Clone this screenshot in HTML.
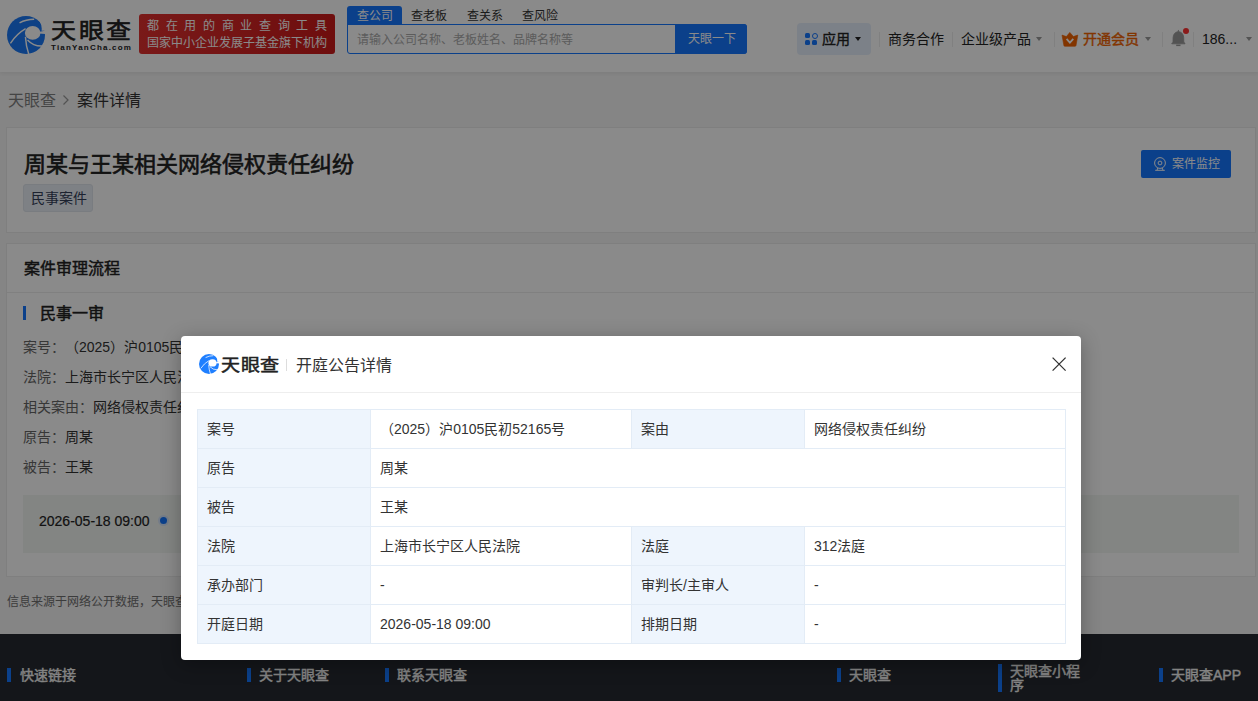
<!DOCTYPE html>
<html lang="zh-CN"><head><meta charset="utf-8">
<style>
*{box-sizing:border-box;margin:0;padding:0}
html,body{width:1258px;height:701px;overflow:hidden}
body{text-spacing-trim:space-all;position:relative;background:#f5f5f5;font-family:"Liberation Sans",sans-serif;color:#333;font-size:14px;line-height:1}
.abs{position:absolute;white-space:nowrap}
#hdr{position:absolute;left:0;top:0;width:1258px;height:72px;background:#fff;box-shadow:0 1px 4px rgba(0,0,0,0.08)}
.card{position:absolute;left:6px;width:1250px;background:#fff;border:1px solid #ebebeb}
#foot{position:absolute;left:0;top:634px;width:1258px;height:67px;background:#262a30}
.fbar{position:absolute;width:4px;height:14px;background:#1677ff}
.ft{position:absolute;color:#f2f2f2;-webkit-text-stroke:0.4px #f2f2f2;font-size:14px;line-height:14px;white-space:nowrap}
#mask{position:absolute;left:0;top:0;width:1258px;height:701px;background:rgba(0,0,0,0.46)}
#modal{position:absolute;left:181px;top:336px;width:900px;height:324px;background:#fff;border-radius:4px;box-shadow:0 4px 20px rgba(0,0,0,0.3)}
table{position:absolute;left:16px;top:73px;width:868px;border-collapse:collapse;table-layout:fixed}
td{border:1px solid #e3ecf6;height:39px;padding:0 0 0 9px;font-size:14px;color:#333;vertical-align:middle;white-space:nowrap}
td.l{background:#eef5fd;color:#333}
</style></head><body>
<div id="hdr">
  <svg class="abs" style="left:7px;top:16px" width="38" height="38" viewBox="2 2 20 20">
    <circle cx="12" cy="12" r="10" fill="#1a78f5"/>
    <ellipse cx="15.5" cy="10.9" rx="4.1" ry="3.6" fill="#fff"/>
    <path d="M15.5 10.9 L23 9.6 L23 11.6 Z" fill="#fff"/><path d="M16.6 2.6 Q20.8 5 20.2 9.7 L23 9.7 L23 2 Z" fill="#fff"/>
    <g stroke="#fff" stroke-width="0.75" fill="none">
      <path d="M11.8 8.7 Q7 11.5 3.8 16.4"/>
      <path d="M11.7 13 Q12 18 13.5 22.2"/>
      <path d="M12.8 14.6 Q16 18 20.5 17.8"/>
      <path d="M8.6 5.6 Q12 3.7 16.3 3.7"/>
    </g>
  </svg>
  <div class="abs" style="left:51px;top:19px;font-size:25px;font-weight:normal;color:#222;line-height:26px;letter-spacing:2.5px;-webkit-text-stroke:0.7px #222;transform:scaleY(0.86);transform-origin:0 0">天眼查</div>
  <div class="abs" style="left:51px;top:43px;font-size:8px;font-weight:bold;color:#222;letter-spacing:1.2px;line-height:9px">TianYanCha.com</div>
  <div class="abs" style="left:139px;top:14px;width:196px;height:40px;border-radius:3px;background:linear-gradient(90deg,#e0302f,#cc1a1a)"></div>
  <div class="abs" style="left:147px;top:19px;font-size:12px;color:#fff;letter-spacing:6.67px;line-height:14px">都在用的商业查询工具</div>
  <div class="abs" style="left:147px;top:36px;font-size:12px;color:#fff;line-height:14px">国家中小企业发展子基金旗下机构</div>
  <!-- search -->
  <div class="abs" style="left:347px;top:6px;width:55px;height:19px;background:#1677ff;border-radius:3px 3px 0 0"></div>
  <div class="abs" style="left:357px;top:9px;font-size:12px;color:#fff;line-height:14px">查公司</div>
  <div class="abs" style="left:411px;top:9px;font-size:12px;color:#333;line-height:14px">查老板</div>
  <div class="abs" style="left:467px;top:9px;font-size:12px;color:#333;line-height:14px">查关系</div>
  <div class="abs" style="left:522px;top:9px;font-size:12px;color:#333;line-height:14px">查风险</div>
  <div class="abs" style="left:347px;top:24px;width:400px;height:30px;border:1.5px solid #1677ff;border-radius:0 3px 3px 3px"></div>
  <div class="abs" style="left:675px;top:24px;width:72px;height:30px;background:#1677ff;border-radius:0 3px 3px 0"></div>
  <div class="abs" style="left:357px;top:33px;font-size:12px;color:#aaa;line-height:14px">请输入公司名称、老板姓名、品牌名称等</div>
  <div class="abs" style="left:688px;top:32px;font-size:12px;color:#fff;line-height:14px">天眼一下</div>
  <!-- right nav -->
  <div class="abs" style="left:797px;top:23px;width:74px;height:32px;border-radius:4px;background:#e6effc"></div>
  <div class="abs" style="left:805px;top:33px;width:12px;height:12px">
    <div class="abs" style="left:0;top:0;width:5.3px;height:5.3px;background:#1677ff;border-radius:1.5px"></div>
    <div class="abs" style="left:6.5px;top:-0.5px;width:6px;height:6px;border:1.6px solid #1677ff;border-radius:50%"></div>
    <div class="abs" style="left:0;top:7px;width:5.3px;height:5.3px;background:#1677ff;border-radius:1.5px"></div>
    <div class="abs" style="left:7px;top:7px;width:5.3px;height:5.3px;background:#1677ff;border-radius:1.5px"></div>
  </div>
  <div class="abs" style="left:822px;top:31px;font-size:14px;font-weight:normal;-webkit-text-stroke:0.35px #222;color:#222;line-height:16px">应用</div>
  <div class="abs" style="left:855px;top:37px;width:0;height:0;border-left:3px solid transparent;border-right:3px solid transparent;border-top:4px solid #222"></div>
  <div class="abs" style="left:879px;top:32px;width:1px;height:15px;background:#ececec"></div>
  <div class="abs" style="left:888px;top:31px;font-size:14px;color:#222;line-height:16px">商务合作</div>
  <div class="abs" style="left:952px;top:32px;width:1px;height:15px;background:#ececec"></div>
  <div class="abs" style="left:961px;top:31px;font-size:14px;color:#222;line-height:16px">企业级产品</div>
  <div class="abs" style="left:1036px;top:37px;width:0;height:0;border-left:3px solid transparent;border-right:3px solid transparent;border-top:4px solid #999"></div>
  <div class="abs" style="left:1054px;top:32px;width:1px;height:15px;background:#ececec"></div>
  <svg class="abs" style="left:1055px;top:22px" width="30" height="30" viewBox="0 0 30 30"><path d="M7 13.1 L11.4 14.6 L14.8 10.4 L18.4 14.6 L22.8 13.1 L21 23.6 Q20.8 24.3 20 24.3 L9.8 24.3 Q9.1 24.3 8.9 23.6 Z" fill="#f06200" stroke="#f06200" stroke-width="0.6" stroke-linejoin="round"/><path d="M11.6 16.9 L14.9 20.6 L18.3 16.9" stroke="#fff" stroke-width="1.8" fill="none"/></svg>
  <div class="abs" style="left:1083px;top:31px;font-size:14px;font-weight:normal;-webkit-text-stroke:0.4px #f06200;color:#f06200;line-height:16px">开通会员</div>
  <div class="abs" style="left:1145px;top:37px;width:0;height:0;border-left:3px solid transparent;border-right:3px solid transparent;border-top:4px solid #999"></div>
  <div class="abs" style="left:1162px;top:32px;width:1px;height:15px;background:#ececec"></div>
  <svg class="abs" style="left:1160px;top:22px" width="40" height="34" viewBox="0 0 40 34"><path d="M18.3 8.3 L18.3 9.6 C15 10 13.3 12.3 13.1 15.5 L13 20 C13 20.6 12.6 20.8 11.8 21.2 L11.8 21.8 L25 21.8 L25 21.2 C24.2 20.8 23.8 20.6 23.8 20 L23.7 15.5 C23.5 12.3 21.8 10 18.5 9.6 L18.5 8.3 Z" fill="#999" stroke="#999" stroke-width="0.8" stroke-linejoin="round"/><rect x="16.2" y="22.6" width="4.3" height="1.5" fill="#999"/></svg>
  <div class="abs" style="left:1183px;top:28px;width:6px;height:6px;border-radius:50%;background:#ff3030"></div>
  <div class="abs" style="left:1193px;top:32px;width:1px;height:15px;background:#ececec"></div>
  <div class="abs" style="left:1202px;top:31px;font-size:14px;color:#222;line-height:16px">186...</div>
  <div class="abs" style="left:1246px;top:37px;width:0;height:0;border-left:3px solid transparent;border-right:3px solid transparent;border-top:4px solid #999"></div>
</div>

<div class="abs" style="left:8px;top:92px;font-size:16px;color:#808080;line-height:18px">天眼查</div>
<svg class="abs" style="left:62px;top:94px" width="8" height="12" viewBox="0 0 8 12"><path d="M1.5 1.5 L6 6 L1.5 10.5" stroke="#999" stroke-width="1.2" fill="none"/></svg>
<div class="abs" style="left:77px;top:92px;font-size:16px;color:#333;line-height:18px">案件详情</div>

<div class="card" style="top:127px;height:106px">
  <div class="abs" style="left:17px;top:24px;font-size:22px;font-weight:normal;-webkit-text-stroke:0.6px #222;color:#222;line-height:26px">周某与王某相关网络侵权责任纠纷</div>
  <div class="abs" style="left:16px;top:56px;width:70px;height:28px;background:#e9eef5;border:1px solid #dfe5ec;border-radius:3px"></div>
  <div class="abs" style="left:24px;top:62px;font-size:14px;color:#34405a;line-height:16px">民事案件</div>
  <div class="abs" style="left:1134px;top:22px;width:90px;height:28px;background:#1677ff;border-radius:2px"></div>
  <svg class="abs" style="left:1146px;top:28px" width="14" height="15" viewBox="0 0 14 15"><circle cx="7" cy="7" r="5.4" stroke="#fff" stroke-width="1" fill="none"/><circle cx="7" cy="7" r="1.9" stroke="#fff" stroke-width="1" fill="none"/><path d="M4.8 12 L4 14.2 M9.2 12 L10 14.2 M2.2 14.3 L11.8 14.3" stroke="#fff" stroke-width="1" fill="none"/></svg>
  <div class="abs" style="left:1165px;top:29px;font-size:12px;color:#fff;line-height:14px">案件监控</div>
</div>

<div class="card" style="top:243px;height:334px">
  <div class="abs" style="left:17px;top:16px;font-size:16px;font-weight:normal;-webkit-text-stroke:0.45px #222;color:#222;line-height:18px">案件审理流程</div>
  <div class="abs" style="left:0;top:48px;width:1247px;height:1px;background:#ededed"></div>
  <div class="abs" style="left:16px;top:62px;width:3px;height:14px;background:#1677ff"></div>
  <div class="abs" style="left:33px;top:61px;font-size:16px;font-weight:normal;-webkit-text-stroke:0.5px #222;color:#222;line-height:18px">民事一审</div>
  <div class="abs" style="left:16px;top:95px;font-size:14px;line-height:16px"><span style="color:#666">案号：</span><span style="color:#333">（2025）沪0105民初52165号</span></div>
  <div class="abs" style="left:16px;top:125px;font-size:14px;line-height:16px"><span style="color:#666">法院：</span><span style="color:#333">上海市长宁区人民法院</span></div>
  <div class="abs" style="left:16px;top:155px;font-size:14px;line-height:16px"><span style="color:#666">相关案由：</span><span style="color:#333">网络侵权责任纠纷</span></div>
  <div class="abs" style="left:16px;top:185px;font-size:14px;line-height:16px"><span style="color:#666">原告：</span><span style="color:#333">周某</span></div>
  <div class="abs" style="left:16px;top:215px;font-size:14px;line-height:16px"><span style="color:#666">被告：</span><span style="color:#333">王某</span></div>
  <div class="abs" style="left:16px;top:251px;width:1216px;height:58px;background:#f3f5f3"></div>
  <div class="abs" style="left:32px;top:269px;font-size:14px;color:#222;line-height:16px;-webkit-text-stroke:0.2px #222">2026-05-18 09:00</div>
  <div class="abs" style="left:153px;top:273px;width:7px;height:7px;border-radius:50%;background:#1677ff;box-shadow:0 0 0 2px #d6e6fb"></div>
</div>

<div class="abs" style="left:7px;top:595px;font-size:12px;color:#707070;line-height:14px">信息来源于网络公开数据，天眼查不对数据真实性作出任何保证</div>

<div id="foot">
  <div class="fbar" style="left:7px;top:34px"></div><div class="ft" style="left:20px;top:34px">快速链接</div>
  <div class="fbar" style="left:247px;top:34px"></div><div class="ft" style="left:259px;top:34px">关于天眼查</div>
  <div class="fbar" style="left:385px;top:34px"></div><div class="ft" style="left:397px;top:34px">联系天眼查</div>
  <div class="fbar" style="left:837px;top:34px"></div><div class="ft" style="left:849px;top:34px">天眼查</div>
  <div class="fbar" style="left:998px;top:30px;height:28px"></div><div class="ft" style="left:1010px;top:30px;white-space:normal;width:72px">天眼查小程序</div>
  <div class="fbar" style="left:1159px;top:34px"></div><div class="ft" style="left:1171px;top:34px">天眼查APP</div>
</div>

<div id="mask"></div>

<div id="modal">
  <svg class="abs" style="left:16px;top:16px" width="24" height="24" viewBox="0 0 24 24">
    <circle cx="12" cy="12" r="10" fill="#1f7fff"/>
    <ellipse cx="15.5" cy="10.9" rx="4.1" ry="3.6" fill="#fff"/>
    <path d="M15.5 10.9 L23 9.6 L23 11.6 Z" fill="#fff"/><path d="M16.6 2.6 Q20.8 5 20.2 9.7 L23 9.7 L23 2 Z" fill="#fff"/>
    <g stroke="#fff" stroke-width="0.75" fill="none">
      <path d="M11.8 8.7 Q7 11.5 3.8 16.4"/>
      <path d="M11.7 13 Q12 18 13.5 22.2"/>
      <path d="M12.8 14.6 Q16 18 20.5 17.8"/>
      <path d="M8.6 5.6 Q12 3.7 16.3 3.7"/>
    </g>
  </svg>
  <div class="abs" style="left:40px;top:21px;font-size:19px;font-weight:normal;-webkit-text-stroke:0.6px #222;color:#222;line-height:20px;letter-spacing:0.7px;transform:scaleY(0.88);transform-origin:0 0">天眼查</div>
  <div class="abs" style="left:105px;top:23px;width:1px;height:12px;background:#ddd"></div>
  <div class="abs" style="left:115px;top:21px;font-size:16px;color:#333;line-height:18px">开庭公告详情</div>
  <svg class="abs" style="left:870px;top:20px" width="16" height="16" viewBox="0 0 16 16"><path d="M1.6 1.6 L14.6 14.6 M14.6 1.6 L1.6 14.6" stroke="#333" stroke-width="1.3"/></svg>
  <div class="abs" style="left:0;top:56px;width:900px;height:1px;background:#eee"></div>
  <table>
    <colgroup><col style="width:173px"><col style="width:261px"><col style="width:173px"><col style="width:261px"></colgroup>
    <tr><td class="l">案号</td><td>（2025）沪0105民初52165号</td><td class="l">案由</td><td>网络侵权责任纠纷</td></tr>
    <tr><td class="l">原告</td><td colspan="3">周某</td></tr>
    <tr><td class="l">被告</td><td colspan="3">王某</td></tr>
    <tr><td class="l">法院</td><td>上海市长宁区人民法院</td><td class="l">法庭</td><td>312法庭</td></tr>
    <tr><td class="l">承办部门</td><td>-</td><td class="l">审判长/主审人</td><td>-</td></tr>
    <tr><td class="l">开庭日期</td><td>2026-05-18 09:00</td><td class="l">排期日期</td><td>-</td></tr>
  </table>
</div>
</body></html>
